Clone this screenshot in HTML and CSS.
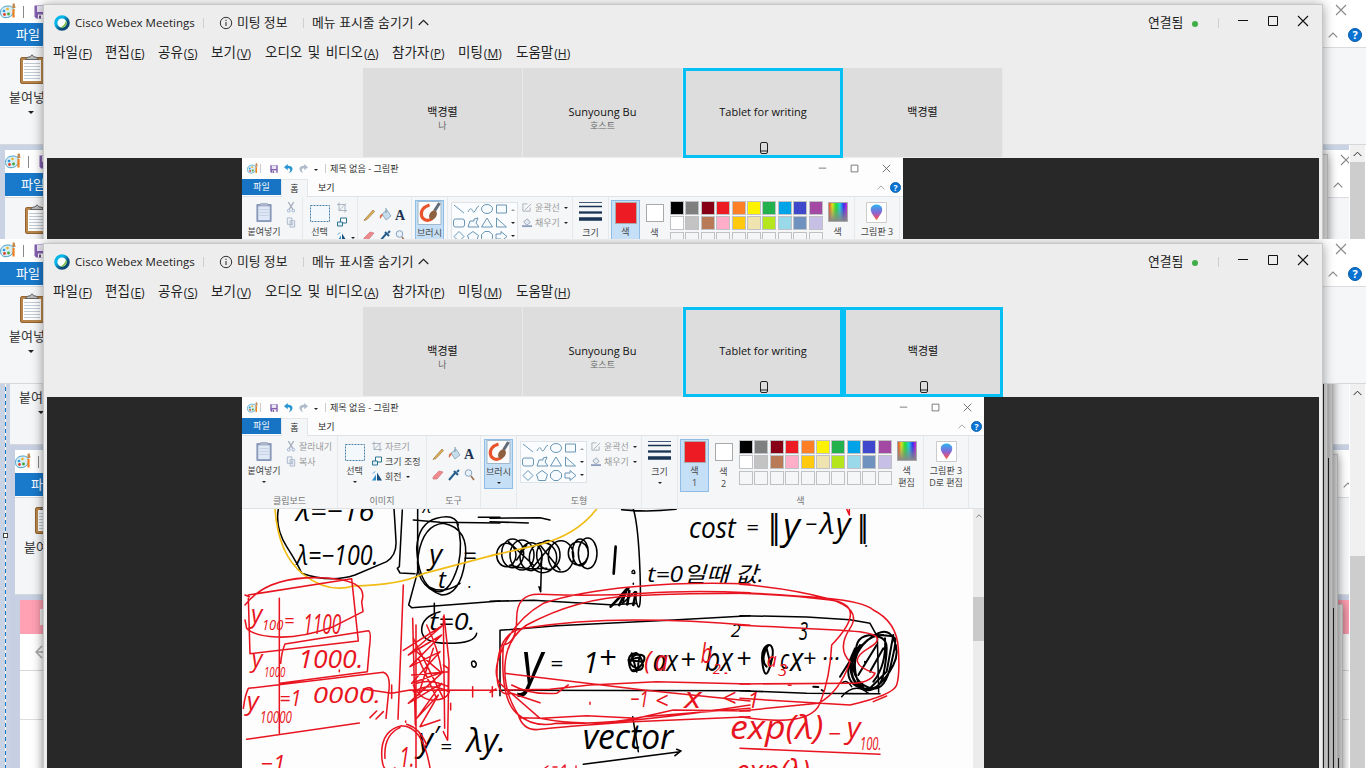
FILE: index.html
```html
<!DOCTYPE html>
<html lang="ko">
<head>
<meta charset="utf-8">
<title>Cisco Webex Meetings</title>
<link rel="stylesheet" href="styles.css">
</head>
<body>
<svg class="defs" aria-hidden="true">
  <defs>
    <linearGradient id="ring" x1="0" y1="0" x2="1" y2="1"><stop offset=".3" stop-color="#07b6ea"/><stop offset=".7" stop-color="#0b4a78"/></linearGradient>
    <linearGradient id="rain"><stop offset="0" stop-color="#e33"/><stop offset=".2" stop-color="#dd2"/><stop offset=".4" stop-color="#2d3"/><stop offset=".6" stop-color="#2cd"/><stop offset=".8" stop-color="#33e"/><stop offset="1" stop-color="#e2c"/></linearGradient>
    <linearGradient id="fade" x2="0" y2="1"><stop offset=".2" stop-color="#888" stop-opacity="0"/><stop offset="1" stop-color="#888"/></linearGradient>
    <linearGradient id="drop" x2="0" y2="1"><stop offset="0" stop-color="#29b6f0"/><stop offset=".5" stop-color="#8468d8"/><stop offset=".8" stop-color="#e2507a"/><stop offset="1" stop-color="#f59a2c"/></linearGradient>
    <symbol id="palette" viewBox="0 0 16 16"><path d="M.5 9.500C.5 5 4 3 8 3s6 2 5.500 5.500-3 6-7.500 6.200C3 15 .5 13 .5 9.500z" fill="#d5edf7" stroke="#4b9fc4"/><circle cx="4" cy="8" r="1.300" fill="#2f9ad8"/><circle cx="7.500" cy="6" r="1.300" fill="#f0b323"/><circle cx="4.500" cy="11.500" r="1.400" fill="#e5432d"/><circle cx="8.500" cy="11" r="1.400" fill="#46a33a"/><path d="M13.500 6v8.500" stroke="#f0801e" stroke-width="2.200"/><path d="M12.200 5l.5-4.500h2L15.500 5z" fill="#c58a50"/></symbol>
    <symbol id="disk" viewBox="0 0 14 14"><path d="M.5.5h13v13H2l-1.500-2z" fill="#8460b0"/><path d="M3 1h8v6H3z" fill="#e9e4f2"/><path d="M4 9.500h7v4H4z" fill="#fff"/><path d="M5 10.500h2v3H5z" fill="#665080"/></symbol>
    <symbol id="board" viewBox="0 0 26 31"><rect x="1.500" y="3.500" width="23" height="26" rx="1.500" fill="#b8864b" stroke="#936331"/><path d="M4 6h18v21H4z" fill="#fff"/><path d="M5 9.500h16M5 12.500h16M5 15.500h16M5 18.500h16M5 21.500h16M5 24.500h16" stroke="#c2ccd5"/><path d="M6 5.500h14L17 3h-2q-2-4-4 0H9z" fill="#bbb" stroke="#666"/></symbol>
    <symbol id="help" viewBox="0 0 14 14"><circle cx="7" cy="7" r="6.500" fill="#0873d2" stroke="#075aa5"/><text x="7" y="11" text-anchor="middle" font-family="Open Sans,sans-serif" font-weight="700" font-size="11" fill="#fff">?</text></symbol>
    <symbol id="up" viewBox="0 0 10 6"><path d="M.7 5.300L5 1l4.300 4.300" fill="none" stroke="currentColor" stroke-width="1.100"/></symbol>
    <symbol id="min" viewBox="0 0 12 12"><path d="M1 5.500h10" stroke="currentColor"/></symbol>
    <symbol id="max" viewBox="0 0 12 12"><path d="M1.500 1.500h9v9h-9z" fill="none" stroke="currentColor"/></symbol>
    <symbol id="close" viewBox="0 0 12 12"><path d="M1 1l10 10M11 1L1 11" stroke="currentColor" stroke-width="1.100"/></symbol>
    <symbol id="webex" viewBox="0 0 16 16"><circle cx="8" cy="8" r="6.200" fill="#fff" stroke="url(#ring)" stroke-width="3.200"/><path d="M12 5.500A5 5 0 0 1 6 12.500Q10.500 11 12 5.500z" fill="#7cc142"/></symbol>
    <symbol id="info" viewBox="0 0 14 14"><circle cx="7" cy="7" r="5.700" fill="none" stroke="#333"/><path d="M7 6v4M7 3.800v1.300" stroke="#333" stroke-width="1.100"/></symbol>
    <symbol id="undo" viewBox="0 0 12 12"><path d="M4.500 0L0 3.800l4.500 3.700V5c3.500-.5 4 3 1 6 6-1.500 7-9-1-8.800z" fill="currentColor"/></symbol>
    <symbol id="clip" viewBox="0 0 18 22"><rect x="1" y="2" width="16" height="19" rx="1" fill="#8999ba"/><path d="M3 4.500h12V19H3z" fill="#dfe8f6"/><path d="M4 8h10M4 11h10M4 14h10" stroke="#c1cfe4"/><path d="M5 1h8v3H5z" fill="#acb6ca"/></symbol>
    <symbol id="scissors" viewBox="0 0 10 12"><path d="M2 0l5 8M8 0L3 8" stroke="#a2aab8" stroke-width="1.300"/><circle cx="2.500" cy="9.500" r="1.500" fill="none" stroke="#9aadcf"/><circle cx="7.500" cy="9.500" r="1.500" fill="none" stroke="#9aadcf"/></symbol>
    <symbol id="copy" viewBox="0 0 10 12"><path d="M1 1h5v7H1zM4 4h5v7H4z" fill="#eef2f8" stroke="#a9b6ca"/><path d="M5.500 6.500h2M5.500 8.500h2" stroke="#a9b6ca"/></symbol>
    <symbol id="select" viewBox="0 0 20 17"><path d="M.5.5h19v16H.5z" fill="#f2f8fc" stroke="#4c81a9" stroke-dasharray="2 1"/></symbol>
    <symbol id="crop" viewBox="0 0 10 10"><path d="M2 0v8h8M0 2h8v8M2 8l7-7" fill="none" stroke="#9ba7b5" stroke-width=".8"/></symbol>
    <symbol id="resize" viewBox="0 0 10 10"><path d="M3.500.5h6v5h-6z" fill="#fff" stroke="#2e7392"/><path d="M.5 4.500h5v4h-5z" fill="#dff2fb" stroke="#2e7392"/></symbol>
    <symbol id="rotate" viewBox="0 0 10 10"><path d="M0 9h4V3z" fill="#2f8fca"/><path d="M5 1v8h5z" fill="#174f7d"/><path d="M1 2l2-2" stroke="#2f8fca"/></symbol>
    <symbol id="tools" viewBox="0 0 46 42"><path d="M3 14L11 5l1.500 1.500L5 14.500l-3 1z" fill="#e0b054" stroke="#8e6733" stroke-width=".6"/><path d="M20 9l5-4 4 6-5 4z" fill="#c7dcea" stroke="#7898b0" stroke-width=".7"/><path d="M20 9q-3 1-2 5l3-4z" fill="#df6840"/><path d="M24 3v5" stroke="#7898b0"/><text x="33" y="15" font-family="Liberation Serif" font-weight="700" font-size="14" fill="#1d3350">A</text><path d="M2 33l6-6 4 1-6 7H2z" fill="#ee8a8c" stroke="#c76a71" stroke-width=".6"/><path d="M18 36l6-7M23 27l4 4M26 28l2-2" stroke="#275e8b" stroke-width="2"/><circle cx="37.500" cy="29" r="3.300" fill="#e8f2fb" stroke="#8aa2bd"/><path d="M40 32l3 4" stroke="#9c6f49" stroke-width="1.500"/></symbol>
    <symbol id="brush" viewBox="0 0 24 24"><path d="M.5.500h23v23H.5z" fill="#fbfbfb" stroke="#9fb8cd"/><path d="M12 4C6 6 3 10 4 14.500s6 6.500 11 3" fill="none" stroke="#e9532b" stroke-width="3.200"/><path d="M17 10l5-8" stroke="#5f6d7b" stroke-width="3"/><ellipse cx="15.500" cy="14" rx="3.500" ry="5" transform="rotate(30 15.500 14)" fill="#8d6040"/></symbol>
    <symbol id="shapes" viewBox="0 0 56 42"><g fill="#f7fbfe" stroke="#5a8bad" stroke-width=".9"><path d="M2 3l10 8M16 10c4-8 4 1 6 0s2-5 5-6" fill="none"/><ellipse cx="35" cy="7" rx="5.500" ry="4.500"/><path d="M44.500 3h10v8h-10z"/><rect x="1.500" y="17" width="11" height="8" rx="2"/><path d="M16 25l2-6h4v-2l4-1-2 5 3 4zM35 16l-5.500 9h11zM44.500 16l10 9h-10z"/><path d="M7 29.500l5 5-5 5-5-5zM21 29.500l5.500 4-2 6h-7l-2-6zM33 29.500h4l3.500 3v4l-3.500 3h-4l-3.500-3v-4zM44 32h5v-2.500l6 5-6 5V37h-5z"/></g></symbol>
    <symbol id="outline" viewBox="0 0 11 10"><path d="M9 5v4H1V1h5M3 8L10 1" fill="none" stroke="#a4adb7"/></symbol>
    <symbol id="fill" viewBox="0 0 11 10"><path d="M2 4l4-3 3 4-4 3z" fill="#e4eaf1" stroke="#9aa7b8"/><path d="M0 9h11" stroke="#8e9fbd" stroke-width="2"/></symbol>
    <symbol id="lines" viewBox="0 0 23 19"><path d="M0 .5h23" stroke="#193353" stroke-width=".8"/><path d="M0 4.500h23" stroke="#193353" stroke-width="1.500"/><path d="M0 10.500h23" stroke="#193353" stroke-width="2.300"/><path d="M0 17h23" stroke="#193353" stroke-width="3.500"/></symbol>
    <symbol id="rainbow" viewBox="0 0 20 20"><path d="M.5.5h19v19H.5z" fill="url(#rain)"/><path d="M.5.5h19v19H.5z" fill="url(#fade)" stroke="#aaa"/></symbol>
    <symbol id="threed" viewBox="0 0 21 21"><path d="M.5.5h20v20H.5z" fill="#fff" stroke="#ccc"/><path d="M10.500 18.500L6 11.500C2 4 9 2.500 10.500 2.500S19 4 15 11.500z" fill="url(#drop)"/></symbol>
    <symbol id="phone" viewBox="0 0 8 12"><rect x=".5" y=".5" width="7" height="11" rx="1.500" fill="none" stroke="#222"/><path d="M.5 9h7" stroke="#222"/></symbol>
  </defs>
</svg>

<section class="screen screen-short">
  <div class="back outer">
    <div class="back-title"><svg class="i16"><use href="#palette"/></svg><i></i><svg class="i14"><use href="#disk"/></svg><svg class="back-close"><use href="#close"/></svg></div>
    <div class="back-tabs"><b>파일</b><svg class="up"><use href="#up"/></svg><svg class="help"><use href="#help"/></svg></div>
    <div class="back-ribbon"><svg class="board"><use href="#board"/></svg><span>붙여넣기</span><em class="arrow"></em></div>
  </div>
  <div class="deep">
    <div class="back d1s">
      <div class="back-title"><svg class="i16"><use href="#palette"/></svg><i></i><svg class="i14"><use href="#disk"/></svg><svg class="back-close"><use href="#close"/></svg></div>
      <div class="back-tabs"><b>파일</b><svg class="up"><use href="#up"/></svg></div>
      <div class="back-ribbon"><svg class="board"><use href="#board"/></svg></div>
    </div>
    <div class="ghost g1s"></div>
  </div>
  <div class="scroll"><svg class="up"><use href="#up"/></svg><div class="thumb"></div></div>

  <div class="webex">
    <header class="titlebar">
      <svg class="logo"><use href="#webex"/></svg><span class="app">Cisco Webex Meetings</span><i class="sep"></i>
      <svg class="info"><use href="#info"/></svg><span class="kt meet">미팅 정보</span><i class="sep"></i>
      <span class="kt hide">메뉴 표시줄 숨기기</span><svg class="up"><use href="#up"/></svg>
      <span class="kt status">연결됨</span><i class="dot"></i><i class="sep"></i>
      <svg class="wc"><use href="#min"/></svg><svg class="wc"><use href="#max"/></svg><svg class="wc"><use href="#close"/></svg>
    </header>
    <nav class="menu"><span>파일<small>(<u>F</u>)</small></span><span>편집<small>(<u>E</u>)</small></span><span>공유<small>(<u>S</u>)</small></span><span>보기<small>(<u>V</u>)</small></span><span>오디오 및 비디오<small>(<u>A</u>)</small></span><span>참가자<small>(<u>P</u>)</small></span><span>미팅<small>(<u>M</u>)</small></span><span>도움말<small>(<u>H</u>)</small></span></nav>
    <div class="people">
      <div class="tile"><b>백경렬</b><small>나</small></div>
      <div class="tile"><b>Sunyoung Bu</b><small>호스트</small></div>
      <div class="tile on"><b>Tablet for writing</b><svg class="phone"><use href="#phone"/></svg></div>
      <div class="tile"><b>백경렬</b></div>
    </div>
    <div class="stage">
      <div class="paint narrow">
        <div class="p-title"><svg class="p-ico"><use href="#palette"/></svg><i></i><svg class="p-disk"><use href="#disk"/></svg><svg class="p-undo"><use href="#undo"/></svg><svg class="p-undo redo"><use href="#undo"/></svg><em class="arrow"></em><i></i><span>제목 없음 - 그림판</span><svg class="pc"><use href="#min"/></svg><svg class="pc"><use href="#max"/></svg><svg class="pc"><use href="#close"/></svg></div>
        <div class="p-tabs"><b>파일</b><span class="home">홈</span><span>보기</span><svg class="up"><use href="#up"/></svg><svg class="help"><use href="#help"/></svg></div>
        <div class="ribbon">
          <div class="grp w61"><div class="row"><div class="big w46"><svg class="clip"><use href="#clip"/></svg><span>붙여넣기</span></div><div class="cmds"><div><svg><use href="#scissors"/></svg></div><div><svg><use href="#copy"/></svg></div></div></div></div>
          <div class="grp w55"><div class="row"><div class="big w33"><svg class="selbox"><use href="#select"/></svg><span>선택</span></div><div class="cmds"><div><svg><use href="#crop"/></svg></div><div><svg><use href="#resize"/></svg></div><div><svg><use href="#rotate"/></svg><em class="arrow"></em></div></div></div></div>
          <div class="grp w54"><svg class="tools"><use href="#tools"/></svg></div>
          <div class="grp w36"><div class="picked brushbox"><svg class="brush"><use href="#brush"/></svg><span>브러시</span></div></div>
          <div class="grp w125"><div class="row"><div class="shapebox"><svg><use href="#shapes"/></svg><div class="steps"><em class="arrow flip"></em><em class="arrow"></em><em class="arrow"></em></div></div><div class="cmds dim"><div><svg><use href="#outline"/></svg>윤곽선<em class="arrow"></em></div><div><svg><use href="#fill"/></svg>채우기<em class="arrow"></em></div></div></div></div>
          <div class="grp w36"><div class="big"><svg class="lines"><use href="#lines"/></svg><span>크기</span></div></div>
          <div class="grp w246"><div class="row colors"><div class="picked colorbox"><i class="sw red"></i><span>색</span></div><div class="colorbox second"><i class="sw"></i><span>색</span></div>
            <div class="pal"><i class="c0"></i><i class="c1"></i><i class="c2"></i><i class="c3"></i><i class="c4"></i><i class="c5"></i><i class="c6"></i><i class="c7"></i><i class="c8"></i><i class="c9"></i><i class="c10"></i><i class="c11"></i><i class="c12"></i><i class="c13"></i><i class="c14"></i><i class="c15"></i><i class="c16"></i><i class="c17"></i><i class="c18"></i><i class="c19"></i><i></i><i></i><i></i><i></i><i></i><i></i><i></i><i></i><i></i><i></i></div>
            <div class="big w30"><svg class="rain"><use href="#rainbow"/></svg><span>색</span></div></div></div>
          <div class="grp w45"><div class="big"><svg class="threed"><use href="#threed"/></svg><span>그림판 3</span></div></div>
        </div>
      </div>
    </div>
  </div>
</section>

<section class="screen screen-tall">
  <div class="deep">
    <div class="edge"></div><div class="handle"></div>
    <div class="back d2">
      <div class="back-title"></div><div class="back-tabs"></div>
      <div class="back-ribbon"><svg class="board"><use href="#board"/></svg><span>붙여넣기</span><em class="arrow"></em></div>
    </div>
    <div class="back d3">
      <div class="back-title"><svg class="i16"><use href="#palette"/></svg><i></i></div>
      <div class="back-tabs"><b>파일</b><svg class="up"><use href="#up"/></svg></div>
      <div class="back-ribbon"><svg class="board"><use href="#board"/></svg><span>붙여넣기</span></div>
    </div>
    <div class="browser d4"><div class="b-tabs"><i></i></div><div class="b-nav"><svg viewBox="0 0 14 14"><path d="M7 1L1 7l6 6M1 7h12" fill="none" stroke="#a9a9a9" stroke-width="1.500"/></svg></div><div class="b-bar"></div></div>
    <div class="ghost g4"></div><div class="ghost g3"></div><div class="ghost g2"></div><div class="ghost g1"></div>
  </div>
  <div class="scroll"><svg class="up"><use href="#up"/></svg><div class="thumb"></div></div>
  <div class="back outer">
    <div class="back-title"><svg class="i16"><use href="#palette"/></svg><i></i><svg class="i14"><use href="#disk"/></svg><svg class="back-close"><use href="#close"/></svg></div>
    <div class="back-tabs"><b>파일</b><svg class="up"><use href="#up"/></svg><svg class="help"><use href="#help"/></svg></div>
    <div class="back-ribbon"><svg class="board"><use href="#board"/></svg><span>붙여넣기</span><em class="arrow"></em></div>
  </div>

  <div class="webex">
    <header class="titlebar">
      <svg class="logo"><use href="#webex"/></svg><span class="app">Cisco Webex Meetings</span><i class="sep"></i>
      <svg class="info"><use href="#info"/></svg><span class="kt meet">미팅 정보</span><i class="sep"></i>
      <span class="kt hide">메뉴 표시줄 숨기기</span><svg class="up"><use href="#up"/></svg>
      <span class="kt status">연결됨</span><i class="dot"></i><i class="sep"></i>
      <svg class="wc"><use href="#min"/></svg><svg class="wc"><use href="#max"/></svg><svg class="wc"><use href="#close"/></svg>
    </header>
    <nav class="menu"><span>파일<small>(<u>F</u>)</small></span><span>편집<small>(<u>E</u>)</small></span><span>공유<small>(<u>S</u>)</small></span><span>보기<small>(<u>V</u>)</small></span><span>오디오 및 비디오<small>(<u>A</u>)</small></span><span>참가자<small>(<u>P</u>)</small></span><span>미팅<small>(<u>M</u>)</small></span><span>도움말<small>(<u>H</u>)</small></span></nav>
    <div class="people">
      <div class="tile"><b>백경렬</b><small>나</small></div>
      <div class="tile"><b>Sunyoung Bu</b><small>호스트</small></div>
      <div class="tile on"><b>Tablet for writing</b><svg class="phone"><use href="#phone"/></svg></div>
      <div class="tile on"><b>백경렬</b><svg class="phone"><use href="#phone"/></svg></div>
    </div>
    <div class="stage">
      <div class="paint wide">
        <div class="p-title"><svg class="p-ico"><use href="#palette"/></svg><i></i><svg class="p-disk"><use href="#disk"/></svg><svg class="p-undo"><use href="#undo"/></svg><svg class="p-undo redo"><use href="#undo"/></svg><em class="arrow"></em><i></i><span>제목 없음 - 그림판</span><svg class="pc"><use href="#min"/></svg><svg class="pc"><use href="#max"/></svg><svg class="pc"><use href="#close"/></svg></div>
        <div class="p-tabs"><b>파일</b><span class="home">홈</span><span>보기</span><svg class="up"><use href="#up"/></svg><svg class="help"><use href="#help"/></svg></div>
        <div class="ribbon">
          <div class="grp w96"><div class="row"><div class="big w46"><svg class="clip"><use href="#clip"/></svg><span>붙여넣기</span><em class="arrow"></em></div><div class="cmds dim"><div><svg><use href="#scissors"/></svg>잘라내기</div><div><svg><use href="#copy"/></svg>복사</div></div></div><label>클립보드</label></div>
          <div class="grp w89"><div class="row"><div class="big w33"><svg class="selbox"><use href="#select"/></svg><span>선택</span><em class="arrow"></em></div><div class="cmds"><div class="dimtext"><svg><use href="#crop"/></svg>자르기</div><div><svg><use href="#resize"/></svg>크기 조정</div><div><svg><use href="#rotate"/></svg>회전<em class="arrow"></em></div></div></div><label>이미지</label></div>
          <div class="grp w54"><svg class="tools"><use href="#tools"/></svg><label>도구</label></div>
          <div class="grp w36"><div class="picked brushbox"><svg class="brush"><use href="#brush"/></svg><span>브러시</span><em class="arrow"></em></div></div>
          <div class="grp w125"><div class="row"><div class="shapebox"><svg><use href="#shapes"/></svg><div class="steps"><em class="arrow flip"></em><em class="arrow"></em><em class="arrow"></em></div></div><div class="cmds dim"><div><svg><use href="#outline"/></svg>윤곽선<em class="arrow"></em></div><div><svg><use href="#fill"/></svg>채우기<em class="arrow"></em></div></div></div><label>도형</label></div>
          <div class="grp w36"><div class="big"><svg class="lines"><use href="#lines"/></svg><span>크기</span><em class="arrow"></em></div></div>
          <div class="grp w246"><div class="row colors"><div class="picked colorbox"><i class="sw red"></i><span>색</span><span>1</span></div><div class="colorbox second"><i class="sw"></i><span>색</span><span>2</span></div>
            <div class="pal"><i class="c0"></i><i class="c1"></i><i class="c2"></i><i class="c3"></i><i class="c4"></i><i class="c5"></i><i class="c6"></i><i class="c7"></i><i class="c8"></i><i class="c9"></i><i class="c10"></i><i class="c11"></i><i class="c12"></i><i class="c13"></i><i class="c14"></i><i class="c15"></i><i class="c16"></i><i class="c17"></i><i class="c18"></i><i class="c19"></i><i></i><i></i><i></i><i></i><i></i><i></i><i></i><i></i><i></i><i></i></div>
            <div class="big w30"><svg class="rain"><use href="#rainbow"/></svg><span>색</span><span>편집</span></div></div><label>색</label></div>
          <div class="grp w45"><div class="big"><svg class="threed"><use href="#threed"/></svg><span>그림판 3</span><span>D로 편집</span></div></div>
        </div>
        <div class="canvas">
          <svg class="ink" viewBox="242 509 731 259">
            <g transform="translate(240 505) scale(.33333)">
              <g class="k">
                <path d="M115 12Q105 70 140 125T185 205Q270 235 345 210L440 170Q470 150 468 110T462 12M487 15L478 185 472 190 480 204 525 206M533 12V200L506 300 515 308 780 288M520 45L600 52 780 54M715 37H780"/>
                <path d="M610 55Q550 60 535 150T605 270Q660 270 675 170T610 55M655 60Q645 25 590 40T530 130Q535 230 580 255T655 180Q670 110 650 50M565 245Q610 270 660 235"/>
                <path d="M600 320Q545 335 545 375T625 415 710 385M583 295V325M702 468q-9 0-7 10t10 8q9-10-3-18"/>
                <text x="168" y="48" font-size="84" textLength="235" lengthAdjust="spacingAndGlyphs">λ=−16</text><text x="170" y="180" font-size="80" textLength="245" lengthAdjust="spacingAndGlyphs">λ=−100.</text>
                <text x="548" y="25" font-size="50">λ</text>
                <text x="568" y="178" font-size="84">y</text><text x="594" y="250" font-size="72">t</text><text x="668" y="178" font-size="72">=</text><text x="684" y="248" font-size="50">.</text>
                <text x="568" y="376" font-size="70" textLength="138" lengthAdjust="spacingAndGlyphs">t=0.</text>
                <text x="534" y="738" font-size="98">y</text><text x="580" y="722" font-size="80">′</text><text x="600" y="747" font-size="62">=</text><text x="680" y="740" font-size="96" textLength="118" lengthAdjust="spacingAndGlyphs">λy.</text>
              </g>
              <path class="y" d="M105 12Q115 150 190 208T340 243Q480 240 550 206L780 145"/>
              <g class="r">
                <path d="M15 300Q80 215 235 218T365 290L369 320 280 365Q180 400 110 396T20 370L15 345M25 270L335 221 355 408 30 446 25 280M15 270L28 275M118 280V685M122 475Q125 440 135 417L385 377Q395 380 388 430L382 500 120 535M10 610Q15 570 25 550L430 502Q455 510 445 570L438 640M20 703L358 654M390 638L410 618M408 642L430 620"/>
                <path d="M490 240L485 370 474 643M518 340L526 660M528 360L528 789M610 335L614 670M612 330L627 470 623 705M370 552L455 565 510 555 770 556M455 540V580M698 545V576M757 545V575"/>
                <path d="M490 436L610 360 505 450 605 390 510 485 600 440 515 535 610 500 505 595 605 535 530 640 595 570 540 665 600 645M520 400L610 580M530 440L600 500M560 360Q595 430 605 500M535 460L590 580M580 430L535 570M515 510L625 500M530 535Q570 520 625 545M520 540Q540 585 580 585T628 560M520 560Q570 530 625 560M610 480L625 490V560M632 595V615M610 680L622 705"/>
                <path d="M485 662Q425 675 425 745T465 789M485 662Q550 665 570 789M480 668Q430 690 435 760M500 658Q540 670 560 720M298 495V500M497 648V652"/>
                <text x="33" y="355" font-size="74">y</text><text x="66" y="376" font-size="46" textLength="64" lengthAdjust="spacingAndGlyphs">100</text><text x="132" y="365" font-size="54">=</text><text x="190" y="387" font-size="84" textLength="114" lengthAdjust="spacingAndGlyphs">1100</text>
                <text x="35" y="486" font-size="70">y</text><text x="72" y="515" font-size="46" textLength="64" lengthAdjust="spacingAndGlyphs">1000</text><text x="175" y="490" font-size="78" textLength="195" lengthAdjust="spacingAndGlyphs">1000.</text>
                <text x="20" y="615" font-size="78">y</text><text x="60" y="653" font-size="50" textLength="96" lengthAdjust="spacingAndGlyphs">10000</text><text x="118" y="603" font-size="64" textLength="66" lengthAdjust="spacingAndGlyphs">=1</text><text x="218" y="595" font-size="66" textLength="205" lengthAdjust="spacingAndGlyphs">0000.</text>
                <text x="62" y="800" font-size="72" textLength="74" lengthAdjust="spacingAndGlyphs">−1</text><text x="478" y="785" font-size="84" textLength="46" lengthAdjust="spacingAndGlyphs">1.</text>
              </g>
            </g>
            <g transform="translate(490 505) scale(.33333)">
              <g class="k">
                <path d="M0 40L150 38 180 45M0 50L115 54M155 150L152 260 147 245M395 14Q470 22 558 13M430 12Q445 60 450 200T440 295L360 300M0 289L130 286 360 299M30 572V376L200 362 550 345 780 332M28 556L780 557M280 778L570 740 555 752M428 635L445 740M560 733L573 738"/>
                <path d="M20 150a28 34 0 1 0 58 0a28 34 0 1 0-58 0M35 145a32 42 0 1 0 66 0a32 42 0 1 0-66 0M60 150a36 45 0 1 0 72 0a36 45 0 1 0-72 0M90 155a33 42 0 1 0 66 0a33 42 0 1 0-66 0M118 158a40 44 0 1 0 82 0a40 44 0 1 0-82 0M140 150a34 42 0 1 0 70 0a34 42 0 1 0-70 0M175 154a38 47 0 1 0 76 0a38 47 0 1 0-76 0M235 145a30 35 0 1 0 60 0a30 35 0 1 0-60 0M247 142a24 40 0 1 0 48 0a24 40 0 1 0-48 0M265 145a28 46 0 1 0 56 0a28 46 0 1 0-56 0M55 110L130 180M150 120L210 195M60 180Q100 195 170 190M110 120L80 165M130 185L180 125"/>
                <path class="fat" d="M377 125L371 206M415 250L362 305M408 260L388 300M418 258L412 298M438 262L430 300"/><path d="M365 302L410 250 398 295 435 260 440 295M426 200q5-8 8 0t-8 4M430 235V238"/>
                <path class="mid" d="M440 445Q410 445 418 480T450 485 455 450 425 460 430 485 445 480 450 460 435 460M425 445L440 500M415 465L455 470M420 455Q440 430 455 465T430 495"/>
                <text x="597" y="100" font-size="90" textLength="140" lengthAdjust="spacingAndGlyphs">cost</text>
                <text x="472" y="230" font-size="64" textLength="350" lengthAdjust="spacingAndGlyphs">t=0일때 값.</text>
                <text x="95" y="535" font-size="176" textLength="64" lengthAdjust="spacingAndGlyphs">y</text><text x="180" y="498" font-size="68">=</text><text x="278" y="505" font-size="88">1</text><text x="326" y="492" font-size="92">+</text><text x="488" y="498" font-size="90" textLength="76" lengthAdjust="spacingAndGlyphs">ax</text><text x="570" y="493" font-size="82">+</text><text x="645" y="498" font-size="98" textLength="84" lengthAdjust="spacingAndGlyphs">bx</text><text x="722" y="396" font-size="54">2</text>
                <text x="278" y="732" font-size="104" textLength="272" lengthAdjust="spacingAndGlyphs">vector</text>
              </g>
              <path class="y" d="M0 153L150 118Q260 90 320 12"/>
              <g class="r">
                <path d="M780 237Q600 230 430 245T160 295Q80 340 40 425T35 540 150 640Q300 670 460 635L780 610M780 263Q600 255 460 265T150 268Q80 265 80 340T40 420Q30 580 80 625T200 655Q400 660 780 600M780 265Q600 265 430 272T110 360Q50 400 45 480T85 630Q100 680 150 673T430 650L780 635M780 361Q600 345 430 345T100 370Q30 380 22 480T65 565L150 593M45 505L460 555 780 588M50 555L180 553 300 540 500 530 780 537M65 540Q120 570 200 565L235 540M90 638L155 640 290 632 440 640 550 615 780 618M0 562L18 552M300 592V598M705 505H710"/>
                <text x="462" y="492" font-size="78">(</text><text x="494" y="498" font-size="90" textLength="40" lengthAdjust="spacingAndGlyphs">a</text><text x="632" y="474" font-size="80" textLength="34" lengthAdjust="spacingAndGlyphs">b</text><text x="668" y="506" font-size="44">2</text>
                <text x="420" y="607" font-size="68" textLength="56" lengthAdjust="spacingAndGlyphs">−1</text><text x="495" y="612" font-size="70">&lt;</text><text x="583" y="608" font-size="88" textLength="52" lengthAdjust="spacingAndGlyphs">x</text><text x="695" y="605" font-size="76">&lt;</text>
              </g>
            </g>
            <g transform="translate(740 505) scale(.33333)">
              <g class="k">
                <path d="M0 332L200 336 330 344 390 355 412 395 416 562M0 557L200 565 420 566M305 575Q345 530 385 565M305 535Q320 520 335 545"/>
                <path class="mid" d="M430 390Q380 390 350 445T350 535 410 545 460 480 460 400 390 400 345 490 370 545M365 420Q330 440 325 490T370 550 430 510 440 430 415 395M340 450Q330 520 380 545T450 490 465 400 400 390 350 450M460 390L440 500 390 550M360 420L300 515M410 420L355 510M430 430L390 500M345 430Q315 490 350 540M435 400Q440 480 400 530"/>
                <path class="mid" d="M85 420Q60 430 68 480T90 485 95 425 75 440 80 485M80 430L92 480M220 545L235 546M245 555L250 558M375 470V472"/>
                <text x="18" y="90" font-size="66">=</text><text x="68" y="100" font-size="98" textLength="42">||</text><text x="130" y="103" font-size="108">y</text><text x="196" y="82" font-size="66">−</text><text x="240" y="88" font-size="90">λ</text><text x="287" y="92" font-size="96">y</text><text x="336" y="95" font-size="94" textLength="42">||</text><text x="374" y="127" font-size="50">.</text>
                <text x="-12" y="488" font-size="80">+</text><text x="120" y="493" font-size="80" textLength="28" lengthAdjust="spacingAndGlyphs">c</text><text x="150" y="498" font-size="98" textLength="40" lengthAdjust="spacingAndGlyphs">x</text><text x="176" y="406" font-size="74" textLength="28" lengthAdjust="spacingAndGlyphs">3</text><text x="188" y="485" font-size="70">+</text><text x="250" y="466" font-size="70" textLength="70">…</text>
              </g>
              <g class="r">
                <path d="M320 12L328 30V12M0 238Q150 250 260 280T330 370 330 470Q300 560 235 595L0 618M0 263Q150 270 260 280T400 315Q470 350 475 430T470 540 330 600L0 580M0 265Q150 270 270 285T275 420Q270 520 240 595T0 635M0 361Q200 370 330 378T385 430 405 505Q390 535 330 535L0 537M440 573L400 590M145 541H153M0 730L420 748"/>
                <text x="80" y="485" font-size="60" textLength="30" lengthAdjust="spacingAndGlyphs">a</text><text x="114" y="512" font-size="50">3</text><text x="22" y="610" font-size="66">1</text>
                <text x="-30" y="702" font-size="96" textLength="280" lengthAdjust="spacingAndGlyphs">exp(λ)</text><text x="264" y="710" font-size="70">−</text><text x="320" y="700" font-size="90">y</text><text x="360" y="736" font-size="56" textLength="64" lengthAdjust="spacingAndGlyphs">100.</text><text x="-15" y="832" font-size="94" textLength="225" lengthAdjust="spacingAndGlyphs">exp(λ)</text>
              </g>
            </g>
            <g class="r"><path d="M545 768l3-2M553 767h4M562 768l3-3v3M576 766v2"/></g>
          </svg>
          <div class="p-scroll"><svg><use href="#up"/></svg><i></i></div>
        </div>
      </div>
    </div>
  </div>
</section>
</body>
</html>
```
FILE: styles.css
```css
*{box-sizing:border-box}
body{margin:0;width:1366px;height:768px;overflow:hidden;background:#fff;font-family:"Open Sans","Noto Sans CJK KR",sans-serif;color:#222}
i,em{font-style:normal;display:block;flex:none}
svg{display:block;flex:none}
.defs{position:absolute;width:0;height:0}
.screen{position:relative;overflow:hidden;width:1366px}
.screen-short{height:239px}
.screen-tall{height:529px}

/* windows behind the meeting */
.back{position:absolute;width:1366px;height:600px;background:#c7d0e2}
.back.outer{left:0;top:0;height:145px}
.screen-short .back.outer{height:239px}
.back-title{height:23px;background:#fff;display:flex;align-items:center}
.back-title i{width:1px;height:12px;background:#888;margin:0 10px 0 7px}
.i16{width:16px;height:16px;margin-top:-2px}
.i14{width:14px;height:14px}
.back-close{width:12px;height:12px;color:#888;margin:-3px 19px 0 auto}
.back-tabs{height:25px;background:#fff;border-bottom:1px solid #d9dbde;display:flex;align-items:center;padding-right:4px}
.back-tabs b{background:#1979ca;color:#fff;font-weight:400;font-size:13px;line-height:22px;width:58px;height:23px;padding-left:16px;align-self:flex-start}
.back-tabs .up{width:10px;height:6px;color:#888;margin-left:auto;margin-right:10px}
.back-tabs .up:last-child{margin-right:24px}
.help{width:14px;height:14px}
.back-ribbon{height:97px;background:#f4f6f8;border-bottom:1px solid #d5d8dc;padding:6px 0 0 19px;font-size:13px}
.back-ribbon span{display:block;margin:2px 0 0 -10px;line-height:20px;color:#333}
.board{width:26px;height:31px}
.back-ribbon .arrow{margin:4px 0 0 9px;border-width:3px}
.arrow{width:0;height:0;border:2px solid transparent;border-top-color:#222;border-bottom:0}
.arrow.flip{border-top:0;border-bottom:2px solid #999}
.back-ribbon .arrow{border-bottom:0}
.deep{position:absolute;left:0;top:145px;width:1349px;height:384px;overflow:hidden;background:#c9d3e4}
.d1s{left:5px;top:5px}
.d2{left:10px;top:-84px}
.d3{left:15px;top:66px}
.d4{left:20px;top:216px}
.browser{position:absolute;width:1366px;height:300px;background:#fff}
.b-tabs{height:34px;background:#ffa0b3;padding:9px 0 0 20px}
.b-tabs i{width:16px;height:16px;background:#f3f3f3}
.b-nav{height:37px;border-bottom:1px solid #d8d8d8;padding:11px 15px}
.b-nav svg{width:14px;height:14px}
.b-bar{height:49px;border-bottom:1px solid #ddd}
.edge{position:absolute;left:5px;top:0;width:1px;height:384px;background:repeating-linear-gradient(#fff 0 3px,#1677cc 3px 7px)}
.handle{position:absolute;left:3px;top:149px;width:5px;height:5px;background:#fff;border:1px solid #444}
.ghost{position:absolute;width:1280px;height:760px;background:#d8d8d8;border:1px solid #bbb;box-shadow:0 1px 10px rgba(0,0,0,.4)}
.ghost::before{content:"";display:block;margin:153px 3px 0;height:600px;background:#282828}
.g1s{left:48px;top:9px}
.g1{left:48px;top:-230px}
.g2{left:53px;top:-80px}
.g3{left:58px;top:70px}
.g4{left:63px;top:220px}
.scroll{position:absolute;left:1349px;top:145px;width:17px;height:384px;background:#f0f0f0;border-left:1px solid #fff;border-right:1px solid #fff;padding-top:6px}
.scroll .up{width:9px;height:6px;margin:0 auto;color:#222}
.scroll .thumb{height:600px;background:#cdcdcd;margin-top:5px}
.screen-tall .scroll .thumb{margin-top:160px}

/* meeting window */
.webex{position:absolute;left:43px;top:4px;width:1280px;height:780px;background:#ededed;border:1px solid #c7c7c7;box-shadow:0 1px 11px rgba(0,0,0,.4)}
.titlebar{height:35px;display:flex;align-items:center;padding:0 13px 0 10px}
.logo{width:16px;height:16px;margin-right:5px}
.app{font-size:11.500px;width:128px;white-space:nowrap;color:#222}
.kt{font-size:12.800px;line-height:18px;white-space:nowrap;color:#222;margin-top:-2px}
.sep{width:1px;height:10px;background:#cfcfcf}
.info{width:14px;height:14px;margin:0 4px 0 15px}
.meet{width:66px}
.hide{width:106px;margin-left:8px;word-spacing:.3px}
.titlebar .up{width:11px;height:7px}
.status{margin-left:auto;width:41px}
.dot{width:6px;height:6px;border-radius:50%;background:#3fae49;margin:2px 20px 0 3px}
.wc{width:12px;height:12px;margin-right:18px;margin-top:-3px;color:#111}
.dot+.sep{margin-right:18px}
.wc:last-child{margin-right:0}
.menu{height:24px;display:grid;grid-template-columns:52px 53px 53px 54px 127px 66px 58px 60px;padding-left:9px;font-size:13.500px;line-height:24px;white-space:nowrap;word-spacing:2px}
.menu small{font-size:12px;position:relative;top:1px;margin-left:1px}
.people{display:flex;height:94px;padding:4px 0 0 319px}
.tile{width:160px;height:89px;background:#ddd;border-right:1px solid #e9e9e9;display:flex;flex-direction:column;align-items:center;padding-top:35px}
.tile b{font-weight:400;font-size:11px;line-height:18px;color:#111}
.tile small{font-size:9px;line-height:10px;color:#666}
.tile.on{border:3px solid #05bff5;padding-top:32px;height:90px}
.phone{width:8px;height:12px;margin:21px 0 0 2px}
.stage{margin:0 3px;height:620px;background:#282828;padding-left:195px}

/* paint */
.paint{background:#fdfdfd;font-size:9px;height:600px}
.narrow{width:661px}
.wide{width:742px}
.p-title{height:21px;display:flex;align-items:center;padding-left:5px}
.p-title i{width:1px;height:9px;background:#ccc;margin-left:2px}
.p-ico{width:11px;height:11px}
.p-disk{width:8px;height:8px;margin-left:9px}
.p-undo{width:10px;height:10px;margin-left:6px;color:#2995d2}
.redo{transform:scaleX(-1);color:#aebbc8;margin-left:4px}
.p-title .arrow{margin:2px 5px 0 6px}
.p-title span{margin-left:4px;line-height:12px;width:80px;white-space:nowrap;color:#333;font-size:9.100px}
.pc{width:9px;height:9px;color:#555;margin-right:23px}
.p-title span+.pc{margin-left:auto}
.pc:last-child{margin-right:12px}
.p-tabs{height:18px;display:flex;align-items:center;border-bottom:1px solid #e0e3e6;line-height:17px;padding-right:2px}
.p-tabs b{width:39px;height:16px;background:#1774c5;color:#fff;font-weight:400;text-align:center;align-self:flex-start;line-height:15px}
.p-tabs span{padding-left:10px}
.p-tabs .home{width:27px;height:18px;background:#f4f6f8;border:1px solid #e4e7ea;border-bottom:0;padding:0;text-align:center}
.p-tabs .up{width:8px;height:5px;color:#999;margin:0 5px 0 auto}
.p-tabs .help{width:11px;height:11px}
.ribbon{height:73px;background:#f4f6f8;display:flex;border-bottom:1px solid #dfe2e5;white-space:nowrap;color:#444;overflow:hidden}
.grp{border-right:1px solid #e6e9ec;height:72px;flex:none;display:flex;flex-direction:column;align-items:center;line-height:12px}
.w96{width:96px}.w89{width:89px}.w61{width:61px}.w55{width:55px}.w54{width:54px}.w36{width:36px}.w125{width:125px}.w246{width:246px}.w45{width:45px}
.row{display:flex;width:100%}
label{margin-top:auto;color:#777;line-height:14px;height:14px}
.big{height:57px;display:flex;flex-direction:column;align-items:center;padding-top:5px}
.w46{width:44px}.w33{width:33px}.w30{width:28px}
.big svg{margin-bottom:3px}
.big .arrow,.brushbox .arrow{margin-top:4px}
.clip{width:18px;height:21px}
.selbox{width:20px;height:17px;margin-top:3px;margin-bottom:4px!important}
.lines{width:23px;height:19px;margin-bottom:6px!important}
.threed{width:21px;height:21px}
.rain{width:20px;height:20px;margin-bottom:4px!important}
.cmds{padding-top:3px}
.cmds div{height:15px;display:flex;align-items:center;gap:3px}
.cmds svg{width:10px;height:11px}
.cmds .arrow{margin-left:1px}
.dim,.dimtext{color:#9b9b9b}
.w33+.cmds{padding-left:1px}
.tools{width:46px;height:42px;margin-top:8px}
.picked{background:#c5dff6;border:1px solid #8fbce4}
.brushbox{width:29px;height:50px;margin-top:3px;display:flex;flex-direction:column;align-items:center}
.brush{width:25px;height:24px;margin-bottom:2px}
.shapebox{display:flex;margin:5px 4px 0 3px;width:67px;height:42px;border:1px solid #dde3e9;background:#fbfcfd}
.shapebox svg{width:56px;height:42px;margin-top:-1px}
.steps{width:10px;display:flex;flex-direction:column;align-items:center;justify-content:space-around;padding:1px}
.colors{padding-left:2px}
.colorbox{width:29px;height:53px;display:flex;flex-direction:column;align-items:center;margin-top:3px;padding-top:1px}
.sw{width:18px;height:18px;background:#fff;border:1px solid #aaa;margin:3px 0 5px}
.sw.red{width:22px;height:22px;background:#ed1c24;margin:0 0 2px}
.pal{display:grid;grid-template-columns:repeat(10,14px);grid-auto-rows:14px;gap:1.400px;margin:4px 1px 0 1px}
.pal i{border:1px solid #bfc1c4;background:#f4f6f8}
.pal .c0{background:#000}.pal .c1{background:#7f7f7f}.pal .c2{background:#880015}.pal .c3{background:#ed1c24}.pal .c4{background:#ff7f27}.pal .c5{background:#fff200}.pal .c6{background:#22b14c}.pal .c7{background:#00a2e8}.pal .c8{background:#3f48cc}.pal .c9{background:#a349a4}
.pal .c10{background:#fff}.pal .c11{background:#c3c3c3}.pal .c12{background:#b97a57}.pal .c13{background:#ffaec9}.pal .c14{background:#ffc90e}.pal .c15{background:#efe4b0}.pal .c16{background:#b5e61d}.pal .c17{background:#99d9ea}.pal .c18{background:#7092be}.pal .c19{background:#c8bfe7}
.canvas{display:flex;height:259px}
.ink{width:731px;height:259px}
.ink path{fill:none;stroke-width:4.600;stroke-linecap:round;stroke-linejoin:round}
.ink .k path{stroke:#000}
.ink .r path{stroke:#e81420}
.ink>.r path{stroke-width:1.400}
.ink .y{stroke:#f2bc16;stroke-width:5}
.ink .k .fat{stroke-width:8}
.ink .k .mid{stroke-width:6}
.ink text{font-family:"Open Sans","Noto Sans CJK KR",sans-serif;font-style:italic;font-weight:400;fill:#000}
.ink .r text{fill:#e81420}
.p-scroll{width:11px;background:#ececec;padding-top:5px}
.p-scroll svg{width:6px;height:4px;margin:0 auto;color:#444}
.p-scroll i{height:44px;background:#cacaca;margin-top:79px}
```
